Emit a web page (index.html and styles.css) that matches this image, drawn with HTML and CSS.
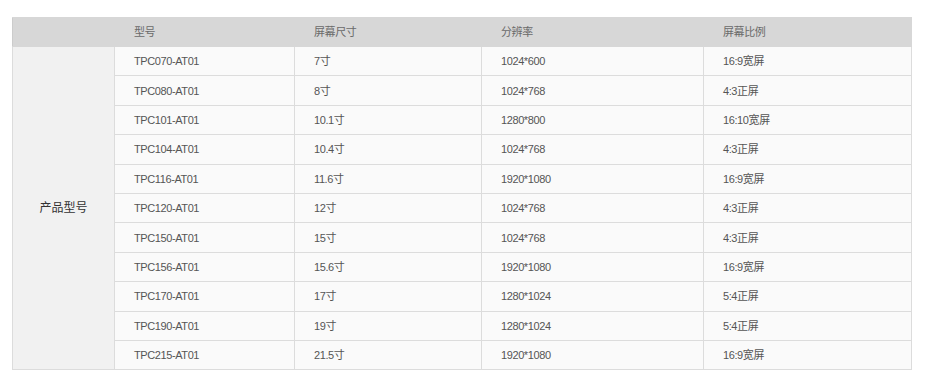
FILE: index.html
```html
<!DOCTYPE html>
<html lang="zh">
<head>
<meta charset="utf-8">
<title>产品型号</title>
<link rel="stylesheet" href="styles.css">
</head>
<body>
<div class="wrap">
<table class="spec">
  <colgroup>
    <col class="c1"><col class="c2"><col class="c3"><col class="c4"><col class="c5">
  </colgroup>
  <thead>
    <tr><th class="blank"></th><th>型号</th><th>屏幕尺寸</th><th>分辨率</th><th>屏幕比例</th></tr>
  </thead>
  <tbody>
    <tr><td class="group" rowspan="11">产品型号</td><td>TPC070-AT01</td><td>7寸</td><td>1024*600</td><td>16:9宽屏</td></tr>
    <tr><td>TPC080-AT01</td><td>8寸</td><td>1024*768</td><td>4:3正屏</td></tr>
    <tr><td>TPC101-AT01</td><td>10.1寸</td><td>1280*800</td><td>16:10宽屏</td></tr>
    <tr><td>TPC104-AT01</td><td>10.4寸</td><td>1024*768</td><td>4:3正屏</td></tr>
    <tr><td>TPC116-AT01</td><td>11.6寸</td><td>1920*1080</td><td>16:9宽屏</td></tr>
    <tr><td>TPC120-AT01</td><td>12寸</td><td>1024*768</td><td>4:3正屏</td></tr>
    <tr><td>TPC150-AT01</td><td>15寸</td><td>1024*768</td><td>4:3正屏</td></tr>
    <tr><td>TPC156-AT01</td><td>15.6寸</td><td>1920*1080</td><td>16:9宽屏</td></tr>
    <tr><td>TPC170-AT01</td><td>17寸</td><td>1280*1024</td><td>5:4正屏</td></tr>
    <tr><td>TPC190-AT01</td><td>19寸</td><td>1280*1024</td><td>5:4正屏</td></tr>
    <tr><td>TPC215-AT01</td><td>21.5寸</td><td>1920*1080</td><td>16:9宽屏</td></tr>
  </tbody>
</table>
</div>
</body>
</html>
```
FILE: styles.css
```css
html, body {
  margin: 0;
  padding: 0;
  background: #fff;
}
.wrap {
  padding: 17px 13px 0 12px;
}
.spec {
  width: 899px;
  table-layout: fixed;
  border-collapse: collapse;
  font-family: "Liberation Sans", Arial, "Noto Sans CJK SC", sans-serif;
  font-size: 11px;
  letter-spacing: -0.4px;
  color: #666;
}
.c1 { width: 102px; }
.c2 { width: 180px; }
.c3 { width: 187px; }
.c4 { width: 222px; }
.c5 { width: 208px; }
.spec thead tr {
  height: 29px;
  background: #d7d7d7;
}
.spec th {
  font-weight: normal;
  text-align: left;
  padding: 0 0 0 19px;
  color: #6a6a6a;
  border: 1px solid #d7d7d7;
  border-left-color: #d0d0d0;
  line-height: 14px;
}
.spec th.blank {
  border-left-color: #cccccc;
}
.spec tbody tr {
  height: 29.4px;
}
.spec td {
  background: #fafafa;
  border: 1px solid #dcdcdc;
  padding: 0 0 0 19px;
  color: #555;
  line-height: 14px;
}
.spec td.group {
  background: #f1f1f1;
  text-align: center;
  padding: 0;
  color: #333;
  font-size: 12px;
  letter-spacing: 0;
}
```
